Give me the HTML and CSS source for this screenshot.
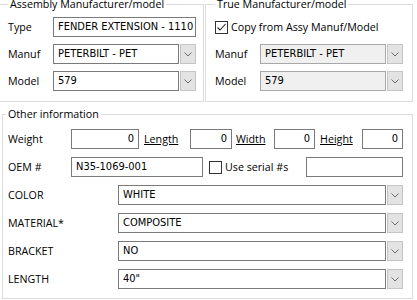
FILE: index.html
```html
<!DOCTYPE html>
<html lang="en">
<head>
  <meta charset="UTF-8" />
  <title>Part details</title>
  <link rel="stylesheet" href="styles.css">
</head>
<body>
  <div class="top">
    <fieldset class="group group-assy">
      <legend>Assembly Manufacturer/model</legend>
      <div class="row">
        <span class="lbl">Type</span>
        <div class="field">FENDER EXTENSION - 1110</div>
      </div>
      <div class="row">
        <span class="lbl">Manuf</span>
        <div class="combo">
          <span class="combo-text">PETERBILT - PET</span>
          <span class="combo-btn"><svg width="8" height="5" viewBox="0 0 8 5"><polyline points="0.5,0.5 4,4 7.5,0.5" fill="none" stroke="#6d6d6d" stroke-width="1"/></svg></span>
        </div>
      </div>
      <div class="row">
        <span class="lbl">Model</span>
        <div class="combo">
          <span class="combo-text">579</span>
          <span class="combo-btn"><svg width="8" height="5" viewBox="0 0 8 5"><polyline points="0.5,0.5 4,4 7.5,0.5" fill="none" stroke="#6d6d6d" stroke-width="1"/></svg></span>
        </div>
      </div>
    </fieldset>

    <fieldset class="group group-true">
      <legend>True Manufacturer/model</legend>
      <div class="row">
        <span class="check"><svg width="11" height="11" viewBox="0 0 11 11"><polyline points="1.5,5.5 4,8 9.5,2" fill="none" stroke="#222" stroke-width="1.1"/></svg></span>
        <span class="check-label">Copy from Assy Manuf/Model</span>
      </div>
      <div class="row">
        <span class="lbl">Manuf</span>
        <div class="combo disabled">
          <span class="combo-text">PETERBILT - PET</span>
          <span class="combo-btn"><svg width="8" height="5" viewBox="0 0 8 5"><polyline points="0.5,0.5 4,4 7.5,0.5" fill="none" stroke="#6d6d6d" stroke-width="1"/></svg></span>
        </div>
      </div>
      <div class="row">
        <span class="lbl">Model</span>
        <div class="combo disabled">
          <span class="combo-text">579</span>
          <span class="combo-btn"><svg width="8" height="5" viewBox="0 0 8 5"><polyline points="0.5,0.5 4,4 7.5,0.5" fill="none" stroke="#6d6d6d" stroke-width="1"/></svg></span>
        </div>
      </div>
    </fieldset>
  </div>

  <fieldset class="group group-other">
    <legend>Other information</legend>
    <div class="row dims">
      <span class="lbl">Weight</span>
      <div class="field num">0</div>
      <span class="lbl link">Length</span>
      <div class="field num">0</div>
      <span class="lbl link">Width</span>
      <div class="field num">0</div>
      <span class="lbl link">Height</span>
      <div class="field num">0</div>
    </div>
    <div class="row">
      <span class="lbl lbl-oem">OEM #</span>
      <div class="field oem">N35-1069-001</div>
      <span class="check unchecked"></span>
      <span class="check-label">Use serial #s</span>
      <div class="field serial"></div>
    </div>
    <div class="row">
      <span class="lbl lbl-wide">COLOR</span>
      <div class="combo">
        <span class="combo-text">WHITE</span>
        <span class="combo-btn"><svg width="8" height="5" viewBox="0 0 8 5"><polyline points="0.5,0.5 4,4 7.5,0.5" fill="none" stroke="#6d6d6d" stroke-width="1"/></svg></span>
      </div>
    </div>
    <div class="row">
      <span class="lbl lbl-wide">MATERIAL*</span>
      <div class="combo">
        <span class="combo-text">COMPOSITE</span>
        <span class="combo-btn"><svg width="8" height="5" viewBox="0 0 8 5"><polyline points="0.5,0.5 4,4 7.5,0.5" fill="none" stroke="#6d6d6d" stroke-width="1"/></svg></span>
      </div>
    </div>
    <div class="row">
      <span class="lbl lbl-wide">BRACKET</span>
      <div class="combo">
        <span class="combo-text">NO</span>
        <span class="combo-btn"><svg width="8" height="5" viewBox="0 0 8 5"><polyline points="0.5,0.5 4,4 7.5,0.5" fill="none" stroke="#6d6d6d" stroke-width="1"/></svg></span>
      </div>
    </div>
    <div class="row">
      <span class="lbl lbl-wide">LENGTH</span>
      <div class="combo">
        <span class="combo-text">40"</span>
        <span class="combo-btn"><svg width="8" height="5" viewBox="0 0 8 5"><polyline points="0.5,0.5 4,4 7.5,0.5" fill="none" stroke="#6d6d6d" stroke-width="1"/></svg></span>
      </div>
    </div>
  </fieldset>
</body>
</html>
```

FILE: styles.css
```css
* {
  box-sizing: border-box;
}
body {
  margin: 0;
  background: #fff;
  font-family: 'Open Sans', 'Noto Sans', sans-serif;
  font-size: 10.7px;
  color: #000;
  overflow: hidden;
}
.top {
  display: flex;
  gap: 1px;
  margin: -3px 0 0 -2px;
}
.group {
  margin: 0;
  min-width: 0;
  border: 1px solid #dcdcdc;
}
.group legend {
  padding: 0 2px;
  line-height: 14px;
}
.group-assy {
  width: 206px;
  padding: 6px 7px 10px 9px;
}
.group-true {
  width: 208px;
  padding: 6px 9px 10px 9px;
}
.group-other {
  width: 411px;
  margin: 5px 0 0 2px;
  padding: 8px 9px 9px 5px;
}
.group-other legend {
  margin-left: -2px;
}
.row {
  display: flex;
  align-items: center;
  height: 20px;
}
.row + .row {
  margin-top: 7px;
}
.group-other .row + .row {
  margin-top: 8px;
}
.lbl {
  width: 45px;
  flex: none;
}
.field {
  height: 20px;
  width: 143px;
  border: 1px solid #7a7a7a;
  background: #fff;
  padding: 0 4px;
  line-height: 18px;
  font-family: 'DejaVu Sans Condensed', 'DejaVu Sans', sans-serif;
  font-stretch: condensed;
  font-size: 11px;
  white-space: nowrap;
  overflow: hidden;
}
.combo {
  display: flex;
  height: 20px;
  width: 143px;
  flex: none;
}
.combo-text {
  flex: 1;
  border: 1px solid #7a7a7a;
  background: #fff;
  padding: 0 4px;
  line-height: 18px;
  font-family: 'DejaVu Sans Condensed', 'DejaVu Sans', sans-serif;
  font-stretch: condensed;
  font-size: 11px;
  white-space: nowrap;
}
.combo-btn {
  width: 16px;
  flex: none;
  display: flex;
  align-items: center;
  justify-content: center;
  background: #e3e3e3;
  border: 1px solid #c4c4c4;
  margin-left: 1px;
}
.combo.disabled .combo-text {
  background: #f0f0f0;
  border-color: #a8a8a8;
}
.check {
  width: 13px;
  height: 13px;
  flex: none;
  border: 1px solid #333;
  background: #fff;
  display: flex;
  align-items: center;
  justify-content: center;
}
.check-label {
  margin-left: 3px;
}

/* other information */
.dims {
  display: grid;
  grid-template-columns: 63px 68px 51px 42px 42px 41px 47px 41px;
}
.dims .lbl {
  width: auto;
}
.dims .field {
  width: auto;
}
.lbl.link {
  text-decoration: underline;
  padding-left: 5px;
}
.dims .lbl.link:nth-of-type(3) {
  padding-left: 4px;
}
.num {
  text-align: right;
}
.lbl-oem {
  width: 63px;
}
.field.oem {
  width: 132px;
}
.row .check.unchecked {
  margin-left: 6px;
}
.field.serial {
  width: 97px;
  margin-left: auto;
}
.lbl-wide {
  width: 110px;
}
.group-other .combo {
  flex: 1;
  width: auto;
}
```
